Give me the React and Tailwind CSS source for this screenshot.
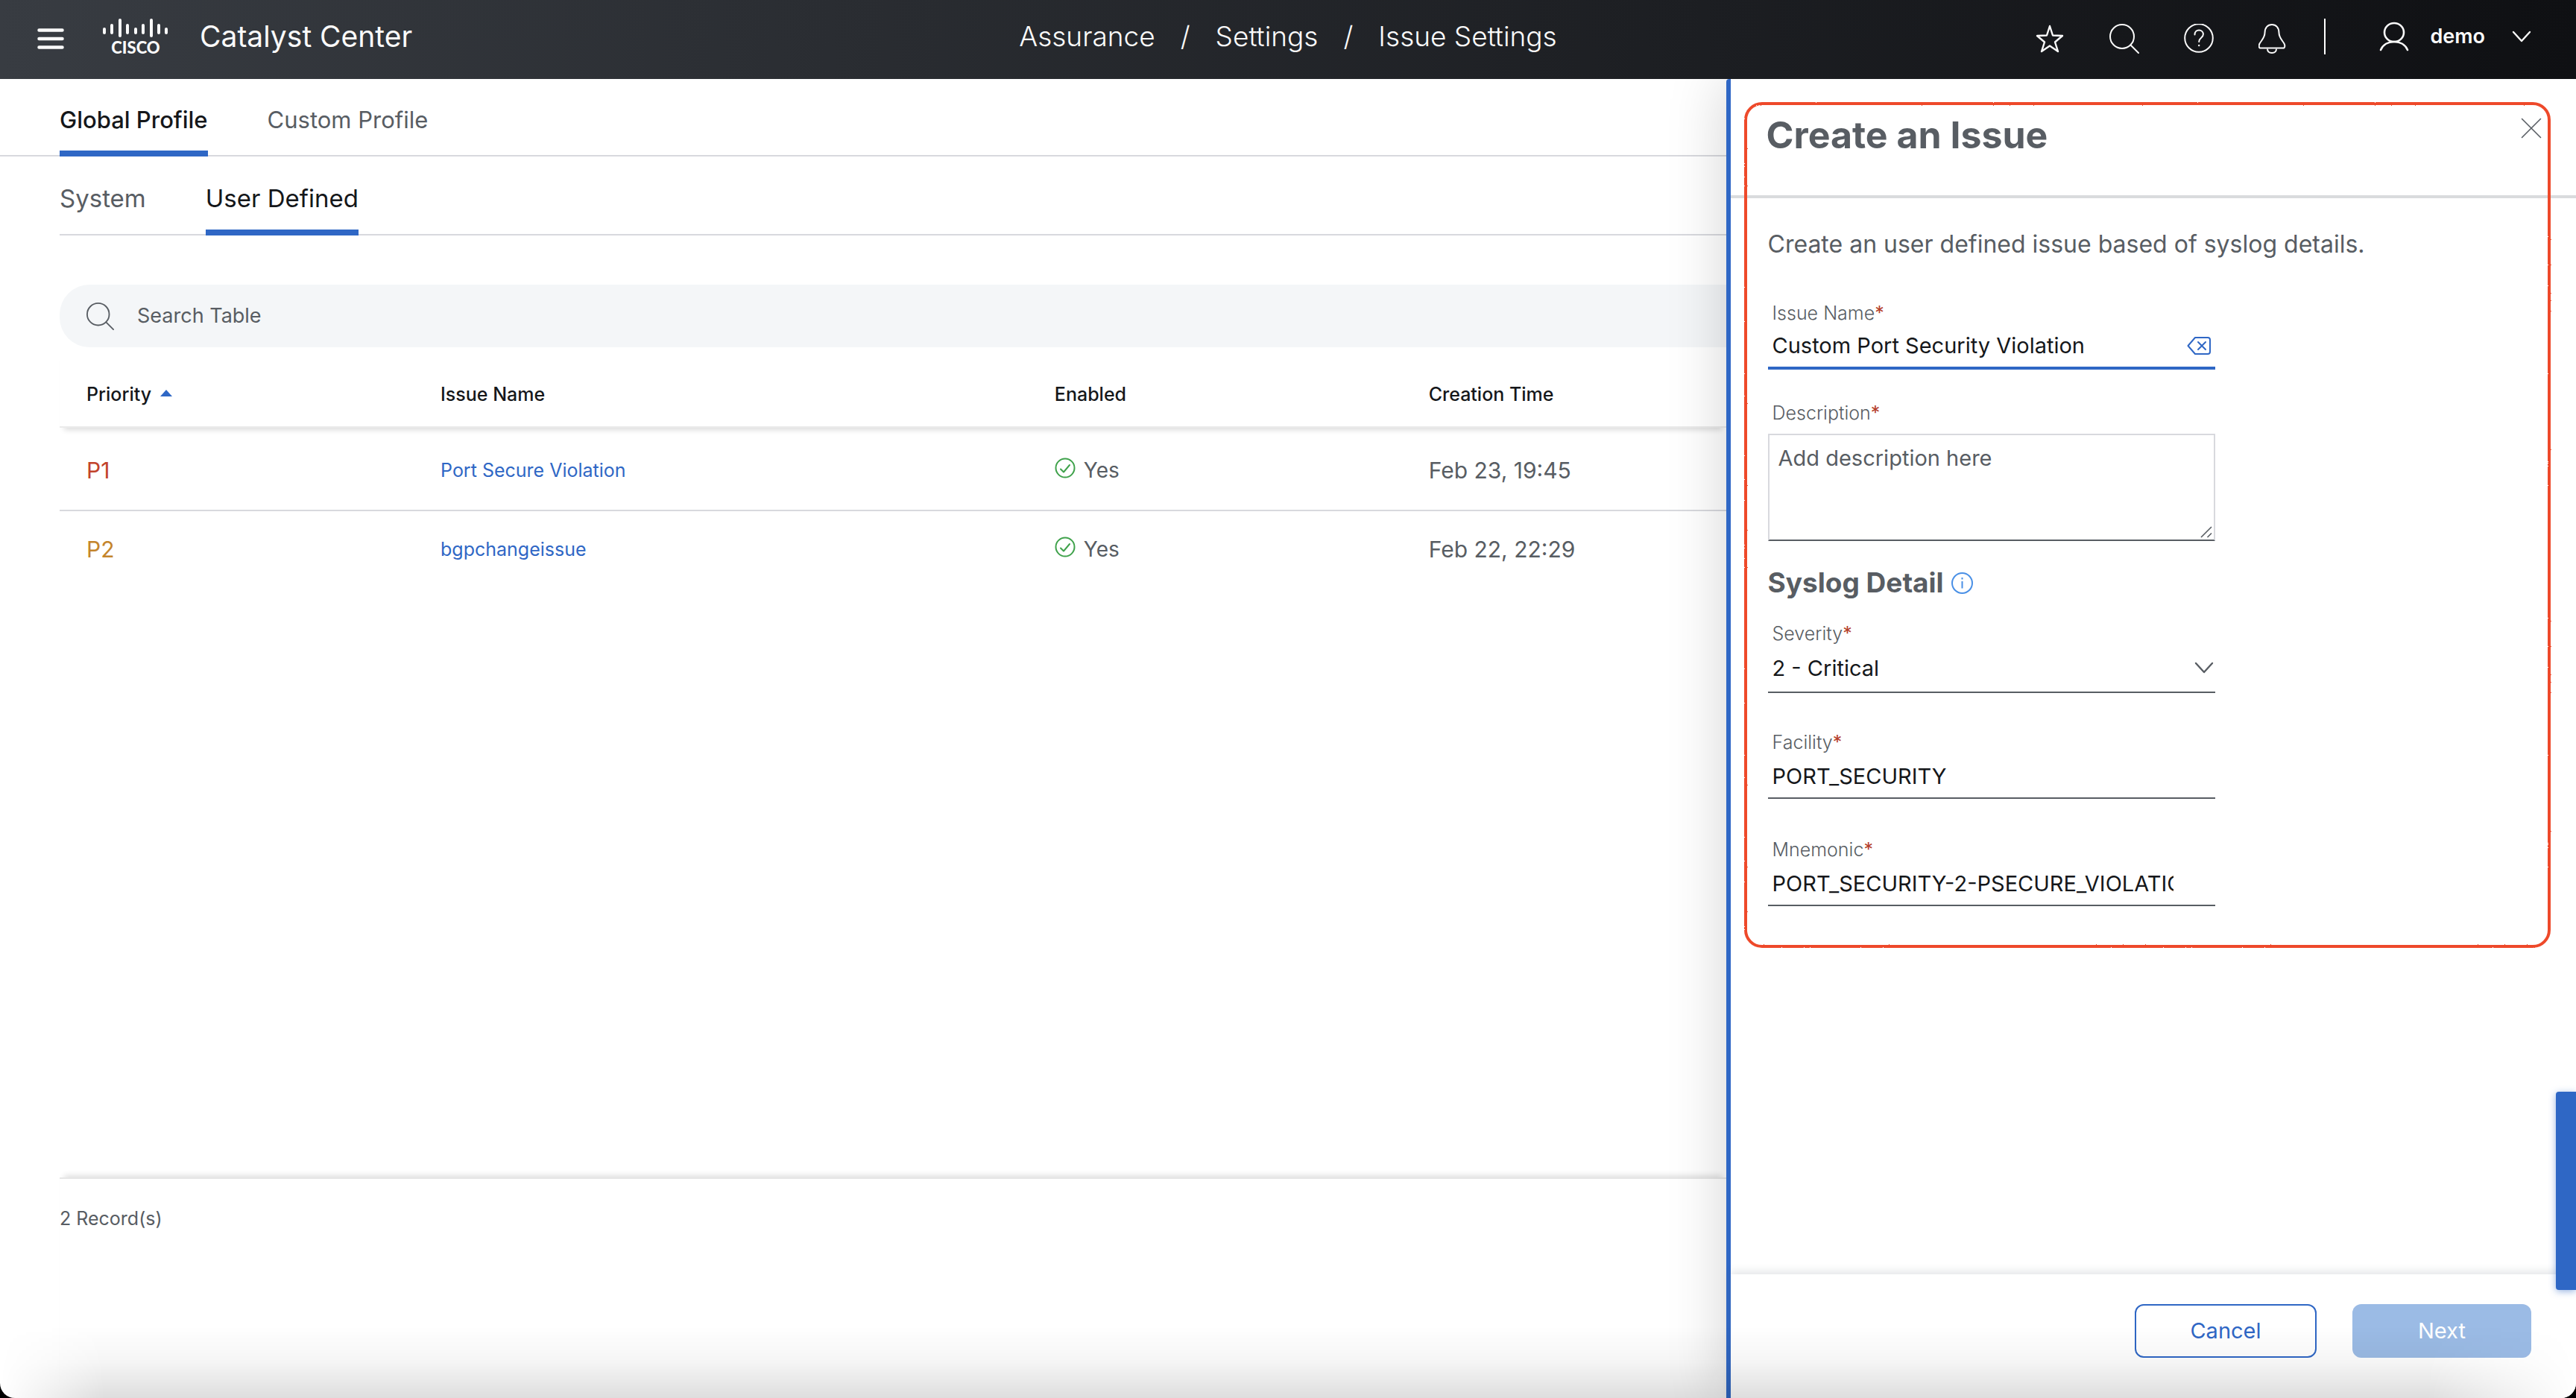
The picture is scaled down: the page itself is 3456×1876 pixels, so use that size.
import React from "react";

const issues = [
  { priority: "P1", tone: "text-[#c2432b]", name: "Port Secure Violation", time: "Feb 23, 19:45" },
  { priority: "P2", tone: "text-[#c4852c]", name: "bgpchangeissue", time: "Feb 22, 22:29" },
];

function CiscoLogo() {
  const bars = [
    [1, 13, 20],
    [11, 8, 20],
    [22, 1, 24],
    [32, 8, 20],
    [43, 13, 20],
    [53, 8, 20],
    [64, 1, 24],
    [74, 8, 20],
    [84, 13, 20],
  ];
  return (
    <svg width="88" height="64" viewBox="0 -8 88 64" role="img" aria-label="Cisco">
      {bars.map(([x, top, bottom]) => (
        <line
          key={x}
          x1={x + 1}
          x2={x + 1}
          y1={top + 1}
          y2={bottom - 1}
          stroke="#fafafa"
          strokeWidth="4"
          strokeLinecap="round"
        />
      ))}
      <text
        x="44"
        y="47"
        fill="#fafafa"
        fontFamily="Lato, sans-serif"
        fontWeight="900"
        fontSize="22"
        textAnchor="middle"
      >
        CISCO
      </text>
    </svg>
  );
}

function SearchIcon({ className }) {
  return (
    <svg className={className} width="40" height="40" viewBox="0 0 40 40" fill="none" stroke="currentColor" strokeWidth="2" strokeLinecap="round">
      <circle cx="17" cy="17" r="16" />
      <path d="M28.5 28.5 39 39" />
    </svg>
  );
}

function StarIcon() {
  return (
    <svg width="40" height="40" viewBox="0 0 40 40" fill="none" stroke="currentColor" strokeWidth="2.4" strokeLinejoin="round">
      <path d="M20 3 24 15.500 37 16 27 24.500 31 37 20 29.500 9 37 13 24.500 3 16 16 15.500Z" />
    </svg>
  );
}

function HelpIcon() {
  return (
    <svg width="40" height="40" viewBox="0 0 40 40" fill="none" stroke="currentColor" strokeWidth="2" strokeLinecap="round">
      <circle cx="20" cy="19" r="18.800" />
      <path d="M14.500 14.500c0-3.500 2.200-6 5.700-6s5.700 2.400 5.700 5.600c0 4.400-5.700 4.400-5.700 10" />
      <circle cx="20.200" cy="29" r="1.200" fill="currentColor" stroke="none" />
    </svg>
  );
}

function BellIcon() {
  return (
    <svg width="40" height="40" viewBox="0 0 40 40" fill="none" stroke="currentColor" strokeWidth="2" strokeLinejoin="round">
      <path d="M1 32.500C-1 31.500-.5 28 .8 26 4 21 7.500 18 7.500 12 7.500 5 11.500 1 17 1s9.500 4 9.500 11c0 6 3.500 9 6.700 14 1.300 2 1.800 5.500-.2 6.500Z" transform="translate(1 0)" />
      <path d="M12 33.500c0 3.500 2.500 5.500 6 5.500s6-2 6-5.500" />
    </svg>
  );
}

function UserIcon() {
  return (
    <svg width="40" height="40" viewBox="0 0 40 40" fill="none" stroke="currentColor" strokeWidth="2.600" strokeLinecap="round">
      <ellipse cx="20" cy="14.500" rx="13" ry="12.500" />
      <path d="M2 38C5 31 12 27 20 27s15 4 18 11" />
    </svg>
  );
}

function Chevron() {
  return (
    <svg width="26" height="16" viewBox="0 0 26 16" fill="none" stroke="currentColor" strokeWidth="2.400" strokeLinecap="round" strokeLinejoin="round">
      <path d="M2 2 13 14 24 2" />
    </svg>
  );
}

function CheckIcon() {
  return (
    <svg width="28" height="28" viewBox="0 0 28 28" fill="none" stroke="#3fa24b" strokeWidth="2" strokeLinecap="round" strokeLinejoin="round">
      <circle cx="14" cy="14" r="12.500" />
      <path d="M8 15.500 12 19.500 20 10" />
    </svg>
  );
}

function Header() {
  const crumbs = ["Assurance", "Settings", "Issue Settings"];
  return (
    <header className="relative z-20 grid h-[106px] grid-cols-[1fr_auto_1fr] items-center bg-linear-to-r from-[#383c42] to-[#0f1013] pb-2 text-[#fafafa]">
      <div className="flex items-center pl-12.5">
        <button type="button" aria-label="Menu" className="mr-[52px] pt-1.5">
          <svg width="36" height="28" viewBox="0 0 36 28" fill="none" stroke="currentColor" strokeWidth="4.500" strokeLinecap="round">
            <path d="M2.500 2.500h31M2.500 14h31M2.500 25.500h31" />
          </svg>
        </button>
        <CiscoLogo />
        <span className="ml-[42px] text-[39px] leading-12">Catalyst Center</span>
      </div>
      <nav aria-label="Breadcrumb" className="flex gap-[34px] text-[37px] font-light leading-12">
        {crumbs.map((c, i) => (
          <React.Fragment key={c}>
            {i > 0 && <span>/</span>}
            <a href="#">{c}</a>
          </React.Fragment>
        ))}
      </nav>
      <div className="flex items-center justify-end pr-15">
        <div className="flex gap-15 pt-1.5">
          <button type="button" aria-label="Favorites"><StarIcon /></button>
          <button type="button" aria-label="Search"><SearchIcon /></button>
          <button type="button" aria-label="Help"><HelpIcon /></button>
          <button type="button" aria-label="Notifications"><BellIcon /></button>
        </div>
        <div className="ml-12 h-12 w-0.5 bg-white" />
        <button type="button" className="ml-[72px] flex items-center">
          <UserIcon />
          <span className="ml-7 mr-9 text-[27px] font-semibold leading-10">demo</span>
          <Chevron />
        </button>
      </div>
    </header>
  );
}

function Tabs() {
  return (
    <>
      <nav className="flex h-[104px] gap-20 border-b-2 border-[#d8d9de] pl-20 text-[31px]">
        <button type="button" className="-mb-0.5 border-b-8 border-[#2f67c5] pt-3.5 font-medium text-[#15171a]">
          Global Profile
        </button>
        <button type="button" className="-mb-0.5 border-b-8 border-transparent pt-3.5 text-[#585d63]">
          Custom Profile
        </button>
      </nav>
      <nav className="ml-20 flex h-[106px] gap-20 border-b-2 border-[#d8d9de] text-[33px]">
        <button type="button" className="-mb-0.5 border-b-8 border-transparent pt-4 text-[#585d63]">
          System
        </button>
        <button type="button" className="-mb-0.5 border-b-8 border-[#2f67c5] pt-4 text-[#15171a]">
          User Defined
        </button>
      </nav>
    </>
  );
}

function IssueTable() {
  return (
    <table className="ml-20 w-[calc(100%-5rem)] table-fixed border-separate border-spacing-0 text-left">
      <colgroup>
        <col className="w-[21.25%]" />
        <col className="w-[36.85%]" />
        <col className="w-[22.45%]" />
        <col />
      </colgroup>
      <thead className="text-[25px] leading-8 text-[#15171a] shadow-[0_9px_7px_-6px_rgba(0,0,0,0.14)]">
        <tr className="h-[108px]">
          <th className="border-b-2 border-[#ebebeb] pl-9 pt-5 font-medium">
            <button type="button" className="flex items-center gap-3">
              Priority
              <span className="pb-1">
                <svg width="16" height="9" viewBox="0 0 16 9" fill="#2f67c5">
                  <path d="M8 0 16 9H0Z" />
                </svg>
              </span>
            </button>
          </th>
          <th className="border-b-2 border-[#ebebeb] pl-9 pt-5 font-medium">Issue Name</th>
          <th className="border-b-2 border-[#ebebeb] pl-9 pt-5 font-medium">Enabled</th>
          <th className="border-b-2 border-[#ebebeb] pl-9 pt-5 font-medium">Creation Time</th>
        </tr>
      </thead>
      <tbody className="text-[28px] leading-9 text-[#585d63] [&>tr:first-child>td]:h-[112px] [&>tr:first-child>td]:border-b-2 [&>tr:first-child>td]:pt-1">
        {issues.map((issue) => (
          <tr key={issue.priority}>
            <td className={"h-[102px] border-[#d8d9de] pl-9 text-[30px] " + issue.tone}>{issue.priority}</td>
            <td className="border-[#d8d9de] pl-9 text-[25px]">
              <a href="#" className="text-[#2f67c5]">{issue.name}</a>
            </td>
            <td className="border-[#d8d9de] pl-9">
              <span className="flex items-center gap-[11px]">
                <span className="pb-1.5"><CheckIcon /></span>
                Yes
              </span>
            </td>
            <td className="border-[#d8d9de] pl-9 text-[30px]">{issue.time}</td>
          </tr>
        ))}
      </tbody>
    </table>
  );
}

function Label({ htmlFor, children }) {
  return (
    <label htmlFor={htmlFor} className="block pl-1.5 text-[25px] font-light leading-8 text-[#585d63]">
      {children}
      <span className="font-normal text-[#b5402b]">*</span>
    </label>
  );
}

function IssuePanel() {
  return (
    <aside className="relative z-10 flex w-[33%] shrink-0 flex-col rounded-tl border-l-[6px] border-[#2f67c5] bg-white shadow-[0_0_80px_rgba(0,0,0,0.18)]">
      <div className="relative pb-14">
        <div className="flex h-40 items-start justify-between border-b-4 border-[#d9dbdd] pl-12 pr-[46px] pt-[45px]">
          <h1 className="text-[50px] font-bold leading-15 text-[#585d63]">Create an Issue</h1>
          <button type="button" aria-label="Close" className="pt-[7px] text-[#585d63]">
            <svg width="28" height="28" viewBox="0 0 28 28" fill="none" stroke="currentColor" strokeWidth="1.600" strokeLinecap="round">
              <path d="M1.500 1.500 26.500 26.500M26.500 1.500 1.500 26.500" />
            </svg>
          </button>
        </div>
        <form className="pl-[50px] pt-[42px]">
          <p className="text-[32px] leading-10 text-[#585d63]">
            Create an user defined issue based of syslog details.
          </p>
          <div className="w-[600px]">
            <div className="pt-14">
              <Label htmlFor="issue-name">Issue Name</Label>
              <div className="flex h-15 items-center border-b-4 border-[#2f67c5] pr-1.5">
                <input
                  id="issue-name"
                  defaultValue="Custom Port Security Violation"
                  className="min-w-0 flex-1 pl-1.5 text-[29px] leading-10 text-[#15171a] outline-none"
                />
                <button type="button" aria-label="Clear issue name">
                  <svg width="32" height="24" viewBox="0 0 32 24" fill="none" stroke="#2f67c5" strokeWidth="2" strokeLinecap="round" strokeLinejoin="round">
                    <path d="M11 1h17a3 3 0 0 1 3 3v16a3 3 0 0 1-3 3H11L1.500 12Z" />
                    <path d="M15 7 25 17M25 7 15 17" />
                  </svg>
                </button>
              </div>
            </div>
            <div className="pt-[42px]">
              <Label htmlFor="description">Description</Label>
              <div className="relative mt-3">
                <textarea
                  id="description"
                  placeholder="Add description here"
                  className="block h-36 w-full resize-none border-2 border-[#d8d9de] border-b-[#585d63] px-3 py-[11px] text-[29px] leading-10 outline-none placeholder:text-[#585d63]"
                />
                <svg className="absolute bottom-1 right-1" width="16" height="16" viewBox="0 0 16 16" fill="none" stroke="#585d63" strokeWidth="1.600">
                  <path d="M1 15 15 1M9.500 15 15 9.500" />
                </svg>
              </div>
            </div>
            <div className="flex items-center gap-2.5 pt-8">
              <h2 className="text-[37px] font-bold leading-12 text-[#585d63]">Syslog Detail</h2>
              <svg width="29" height="29" viewBox="0 0 29 29" fill="none" stroke="#4a90e6" strokeWidth="2">
                <circle cx="14.500" cy="14.500" r="13.500" />
                <path d="M14.500 12v9.500M14.500 7v2.500" />
              </svg>
            </div>
            <div className="pt-7">
              <Label htmlFor="severity">Severity</Label>
              <div className="relative">
                <select
                  id="severity"
                  className="h-16 w-full appearance-none border-b-2 border-[#585d63] pl-1.5 text-[29px] text-[#15171a] outline-none"
                >
                  <option>2 - Critical</option>
                </select>
                <span className="pointer-events-none absolute right-0.5 top-5.5 text-[#585d63]"><Chevron /></span>
              </div>
            </div>
            <div className="pt-[50px]">
              <Label htmlFor="facility">Facility</Label>
              <input
                id="facility"
                defaultValue="PORT_SECURITY"
                className="block h-15 w-full border-b-2 border-[#585d63] pl-1.5 pr-[42px] text-[29px] text-[#15171a] outline-none"
              />
            </div>
            <div className="pt-[52px]">
              <Label htmlFor="mnemonic">Mnemonic</Label>
              <input
                id="mnemonic"
                defaultValue="PORT_SECURITY-2-PSECURE_VIOLATION"
                className="block h-15 w-full border-b-2 border-[#585d63] pl-1.5 pr-14 text-[29px] text-[#15171a] outline-none"
              />
            </div>
          </div>
        </form>
        <div className="pointer-events-none absolute bottom-0 left-[18px] right-[34px] top-[31px] rounded-[24px] border-4 border-[#ee4a2b] [filter:url(#rough)]" />
        <svg width="0" height="0" className="absolute" aria-hidden="true">
          <filter id="rough">
            <feTurbulence type="fractalNoise" baseFrequency="0.5" numOctaves="1" result="n" />
            <feDisplacementMap in="SourceGraphic" in2="n" scale="2" />
          </filter>
        </svg>
      </div>
      <div className="mt-auto flex h-[166px] items-start justify-end gap-12 pr-15 pt-10 text-[29px] shadow-[0_-4px_10px_rgba(90,100,110,0.16)]">
        <button type="button" className="h-18 w-[244px] rounded-xl border-2 border-[#2f67c5] text-[#2f67c5]">
          Cancel
        </button>
        <button type="button" className="h-18 w-60 rounded-xl bg-[#9bbbe5] text-white">
          Next
        </button>
      </div>
      <button
        type="button"
        aria-label="Open side drawer"
        className="absolute bottom-[145px] right-0 h-[266px] w-[27px] rounded-l bg-[#2f67c5] shadow-[0_2px_10px_rgba(47,103,197,0.5)]"
      />
    </aside>
  );
}

export default function App() {
  return (
    <div className="bg-black font-[Inter,sans-serif]">
      <div className="relative flex min-h-screen flex-col overflow-hidden rounded-b-[20px] bg-white">
        <Header />
        <div className="flex flex-1">
          <main className="flex min-w-0 flex-1 flex-col">
            <Tabs />
            <label className="ml-20 mt-[66px] flex h-[84px] items-center rounded-l-[40px] bg-[#f4f6f8] pl-9 text-[#585d63]">
              <SearchIcon className="size-[37px]" />
              <input
                type="search"
                aria-label="Search Table"
                placeholder="Search Table"
                className="ml-[31px] flex-1 text-[27px] outline-none placeholder:text-[#585d63]"
              />
            </label>
            <IssueTable />
            <footer className="ml-20 mt-auto h-[296px] border-t-2 border-[#e6e6e6] pt-[35px] text-[25px] leading-9 text-[#585d63] shadow-[0_-9px_7px_-6px_rgba(0,0,0,0.12)]">
              2 Record(s)
            </footer>
          </main>
          <IssuePanel />
        </div>
        <div className="pointer-events-none absolute inset-x-0 bottom-0 z-20 h-24 bg-linear-to-b from-transparent via-black/4 to-black/13 [mask-image:linear-gradient(to_right,transparent,black_140px,black_calc(100%-200px),transparent)]" />
      </div>
    </div>
  );
}
